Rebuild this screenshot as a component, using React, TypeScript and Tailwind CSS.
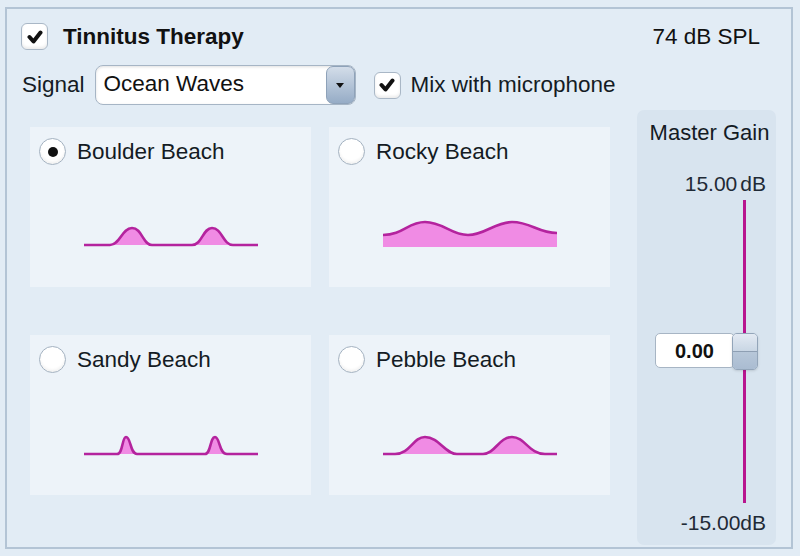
import React from 'react';

const font = { fontFamily: '"Liberation Sans", Arial, sans-serif' };

const CheckBox: React.FC = () => (
  <div className="w-[27px] h-[27px] shrink-0 rounded-[6px] border-[1.5px] border-[#a9b7c6] bg-white flex items-center justify-center shadow-[inset_0_-2px_3px_rgba(0,0,0,0.08)]">
    <svg width="16" height="14" viewBox="0 0 16 14">
      <path d="M2.5 7 L6.5 11.5 L13.5 2.5" fill="none" stroke="#111" strokeWidth="4" strokeLinecap="round" strokeLinejoin="round" />
    </svg>
  </div>
);

const Radio: React.FC<{ checked?: boolean }> = ({ checked }) => (
  <div className="w-[27px] h-[27px] shrink-0 rounded-full border-[1.5px] border-[#a3b1c0] bg-white flex items-center justify-center shadow-[inset_0_-2px_3px_rgba(0,0,0,0.06)]">
    {checked && <div className="w-[10px] h-[10px] rounded-full bg-[#111]" />}
  </div>
);

type Wave = 'boulder' | 'rocky' | 'sandy' | 'pebble';

const wavePaths: Record<Wave, { fill: string; line: string }> = {
  boulder: {
    fill: 'M26 33 C36 33 38 16 48 16 C58 16 59 33 68 33 Z M108 33 C118 33 119 16 128 16 C138 16 139 33 149 33 Z',
    line: 'M0 33 L26 33 C36 33 38 16 48 16 C58 16 59 33 68 33 L108 33 C118 33 119 16 128 16 C138 16 139 33 149 33 L174 33',
  },
  rocky: {
    fill: 'M0 23 C20 23 25 10 42 10 C60 10 68 23 85 23 C102 23 112 10 129 10 C148 10 155 21 174 21 L174 35 L0 35 Z',
    line: 'M0 23 C20 23 25 10 42 10 C60 10 68 23 85 23 C102 23 112 10 129 10 C148 10 155 21 174 21',
  },
  sandy: {
    fill: 'M33 34 C39 34 38 17 42 17 C47 17 46 34 53 34 Z M121 34 C127 34 126 17 131 17 C136 17 135 34 143 34 Z',
    line: 'M0 34 L33 34 C39 34 38 17 42 17 C47 17 46 34 53 34 L121 34 C127 34 126 17 131 17 C136 17 135 34 143 34 L174 34',
  },
  pebble: {
    fill: 'M12 34 C27 34 30 17 42 17 C56 17 62 34 74 34 L100 34 C112 34 116 17 129 17 C142 17 146 34 162 34 Z',
    line: 'M0 34 L12 34 C27 34 30 17 42 17 C56 17 62 34 74 34 L100 34 C112 34 116 17 129 17 C142 17 146 34 162 34 L174 34',
  },
};

const WaveCard: React.FC<{ label: string; wave: Wave; checked?: boolean }> = ({ label, wave, checked }) => (
  <div className="h-[160px] bg-[#edf3f9] flex flex-col">
    <div className="flex items-center pl-[9px] pt-[11px] gap-[11px]">
      <Radio checked={checked} />
      <span className="text-[22.5px] leading-[27px] text-[#141b24]">{label}</span>
    </div>
    <svg className="ml-[54px] mt-[47px]" width="174" height="40" viewBox="0 0 174 40">
      <path d={wavePaths[wave].fill} fill="#f08be4" />
      <path d={wavePaths[wave].line} fill="none" stroke="#b4239e" strokeWidth="2.6" strokeLinejoin="round" />
    </svg>
  </div>
);

const MasterGain: React.FC = () => (
  <div className="w-[139px] h-[435px] ml-[27px] rounded-[7px] bg-[#d8e4ef] flex flex-col pt-[10px]">
    <div className="text-center text-[22px] leading-[26px] text-[#141b24] pl-[6px]">Master Gain</div>
    <div className="mt-[26px] text-right pr-[10px] text-[21px] leading-[24px] text-[#1f2a36]">
      15.00<span className="ml-[3px]">dB</span>
    </div>
    <div className="relative h-[303px] mt-[4px]">
      <div className="ml-[106px] w-[3px] h-full bg-[#b8168f]" />
      <div className="absolute left-[18px] top-[133px] w-[80px] h-[35px] rounded-[5px] border-[1.5px] border-[#a7b5c4] bg-white flex items-center pl-[19px]">
        <span className="text-[20px] font-bold text-[#111]">0.00</span>
      </div>
      <div className="absolute left-[95px] top-[133px] w-[26px] h-[37px] rounded-[5px] border border-[#93a5b9] overflow-hidden flex flex-col shadow-sm">
        <div className="flex-1 bg-gradient-to-b from-[#e3eaf3] to-[#c9d6e4] border-b border-[#8e9fb3]" />
        <div className="flex-1 bg-gradient-to-b from-[#b7c7d9] to-[#aabcd1]" />
      </div>
    </div>
    <div className="mt-[8px] text-right pr-[10px] text-[21px] leading-[24px] text-[#1f2a36]">-15.00dB</div>
  </div>
);

export default function App() {
  return (
    <div className="w-[800px] h-[556px] bg-[#e2ecf5] overflow-hidden" style={font}>
      <div className="ml-[5px] mt-[7px] w-[788px] h-[542px] border-2 border-[#b3c4d5] flex flex-col">
        <div className="flex items-center justify-between pt-[14px] pl-[14px] pr-[31px]">
          <div className="flex items-center gap-[15px]">
            <CheckBox />
            <span className="text-[22.5px] font-bold leading-[27px] text-[#111]">Tinnitus Therapy</span>
          </div>
          <span className="text-[22.5px] leading-[27px] text-[#111]">74 dB SPL</span>
        </div>

        <div className="flex items-center mt-[15px] pl-[15px] h-[40px]">
          <span className="text-[22.5px] text-[#141b24]">Signal</span>
          <div className="ml-[10px] w-[261px] h-[40px] rounded-[8px] border-[1.5px] border-[#a6b5c5] bg-white flex shadow-[inset_0_1px_3px_rgba(0,0,0,0.12)]">
            <span className="flex-1 pl-[8px] text-[22.5px] leading-[36px] text-[#111]">Ocean Waves</span>
            <div className="w-[29px] h-full rounded-[7px] border border-[#8ea2b9] bg-gradient-to-b from-[#d3dde9] to-[#96acc6] flex items-center justify-center">
              <svg width="10" height="7" viewBox="0 0 10 7">
                <path d="M1 1 L9 1 L5 6 Z" fill="#111" />
              </svg>
            </div>
          </div>
          <div className="ml-[18px]">
            <CheckBox />
          </div>
          <span className="ml-[10px] text-[22.5px] text-[#141b24]">Mix with microphone</span>
        </div>

        <div className="flex mt-[5px]">
          <div className="pl-[23px] pt-[17px]">
            <div className="grid grid-cols-[281px_281px] gap-x-[18px] gap-y-[48px]">
              <WaveCard label="Boulder Beach" wave="boulder" checked />
              <WaveCard label="Rocky Beach" wave="rocky" />
              <WaveCard label="Sandy Beach" wave="sandy" />
              <WaveCard label="Pebble Beach" wave="pebble" />
            </div>
          </div>
          <MasterGain />
        </div>
      </div>
    </div>
  );
}
